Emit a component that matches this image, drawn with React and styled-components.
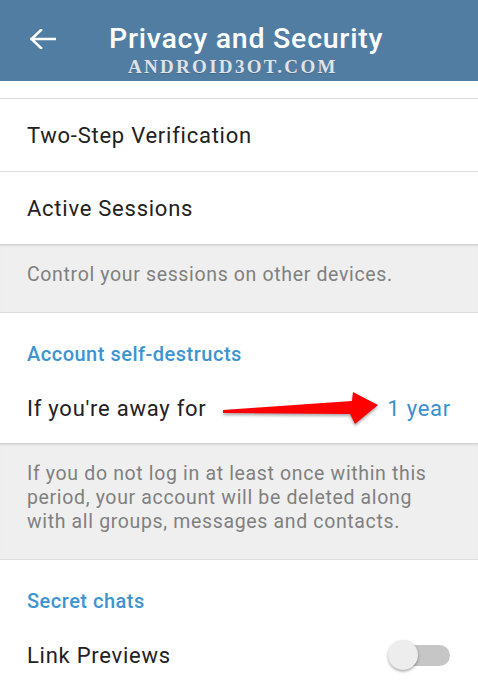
import React from "react";
import styled, { createGlobalStyle } from "styled-components";

const Global = createGlobalStyle`
  html, body { margin: 0; padding: 0; background: #ffffff; }
  body { font-family: Roboto, "Noto Sans", sans-serif; -webkit-font-smoothing: antialiased; }
  * { box-sizing: border-box; }
`;

const Screen = styled.div`
  width: 478px;
  height: 691px;
  overflow: hidden;
  background: #ffffff;
  display: flex;
  flex-direction: column;
`;

const Header = styled.header`
  position: relative;
  height: 81px;
  flex: none;
  background: #527da3;
  display: flex;
  align-items: center;
  padding: 0 0 4px 30px;
  gap: 53px;
`;

const BackIcon = styled.svg`
  width: 26px;
  height: 20px;
  flex: none;
`;

const Title = styled.h1`
  margin: 0;
  color: #ffffff;
  font-family: Roboto, sans-serif;
  font-weight: 500;
  font-size: 28.5px;
  letter-spacing: 0.75px;
`;

const Watermark = styled.div`
  position: absolute;
  left: 128px;
  top: 56px;
  font-family: "Liberation Serif", "DejaVu Serif", serif;
  font-weight: 700;
  font-size: 19px;
  letter-spacing: 2.3px;
  color: #dfe3e8;
  text-shadow: 0 1px 0 rgba(60, 80, 100, 0.5);
`;

const Spacer = styled.div`
  height: 18px;
  flex: none;
  border-bottom: 1px solid #dcdcdc;
`;

const Row = styled.div`
  position: relative;
  height: ${(p) => p.$h || 72}px;
  flex: none;
  display: flex;
  align-items: center;
  justify-content: space-between;
  padding: 0 27px;
  background: #ffffff;
  border-bottom: ${(p) => (p.$divider ? "1px solid #dcdcdc" : "none")};
`;

const Label = styled.span`
  font-size: 22px;
  letter-spacing: 0.75px;
  color: #212121;
`;

const Value = styled.span`
  font-size: 22px;
  letter-spacing: 0.75px;
  color: #3a8fcf;
`;

const Info = styled.div`
  flex: none;
  background: #efefef;
  padding: 19px 27px 25px;
  font-size: 19.5px;
  letter-spacing: 0.65px;
  line-height: 24px;
  color: #808080;
  box-shadow: inset 0 3px 3px -2px rgba(0, 0, 0, 0.18);
  border-bottom: 1px solid #dddddd;
`;

const Section = styled.section`
  flex: none;
  display: flex;
  flex-direction: column;
  background: #ffffff;
`;

const SectionTitle = styled.div`
  height: 60px;
  padding: 28px 27px 0;
  font-size: 20px;
  letter-spacing: 0.5px;
  line-height: 26px;
  font-weight: 500;
  color: #3d94d1;
`;

const Arrow = styled.svg`
  position: absolute;
  left: 220px;
  top: 16px;
  width: 162px;
  height: 38px;
  filter: drop-shadow(0 2px 1.5px rgba(0, 0, 0, 0.35));
`;

const Switch = styled.div`
  position: relative;
  width: 58px;
  height: 21px;
  margin-right: 1px;
  border-radius: 11px;
  background: #c6c6c6;
`;

const Thumb = styled.div`
  position: absolute;
  left: -4px;
  top: -4.5px;
  width: 30px;
  height: 30px;
  border-radius: 50%;
  background: #ededed;
  box-shadow: 0 1.5px 3px rgba(0, 0, 0, 0.35);
`;

export default function App() {
  return (
    <Screen>
      <Global />
      <Header>
        <BackIcon viewBox="0 0 26 20">
          <path d="M1.5 10 H25 M11 1 L1.5 10 L11 19" fill="none" stroke="#ffffff" strokeWidth="2.6" strokeLinecap="square" strokeLinejoin="miter" />
        </BackIcon>
        <Title>Privacy and Security</Title>
        <Watermark>ANDROID3OT.COM</Watermark>
      </Header>
      <Spacer />
      <Row $divider $h={73}>
        <Label>Two-Step Verification</Label>
      </Row>
      <Row $h={72}>
        <Label>Active Sessions</Label>
      </Row>
      <Info>Control your sessions on other devices.</Info>
      <Section>
        <SectionTitle>Account self-destructs</SectionTitle>
        <Row $h={70}>
          <Label>If you're away for</Label>
          <Value>1 year</Value>
          <Arrow viewBox="0 0 162 38">
            <polygon points="3,21 132,12 133,3 158,16 135,35 130,25 3,24" fill="#ff0000" />
          </Arrow>
        </Row>
      </Section>
      <Info>
        If you do not log in at least once within this period, your account will be deleted along
        with all groups, messages and contacts.
      </Info>
      <Section>
        <SectionTitle>Secret chats</SectionTitle>
        <Row $h={70}>
          <Label>Link Previews</Label>
          <Switch>
            <Thumb />
          </Switch>
        </Row>
      </Section>
    </Screen>
  );
}
